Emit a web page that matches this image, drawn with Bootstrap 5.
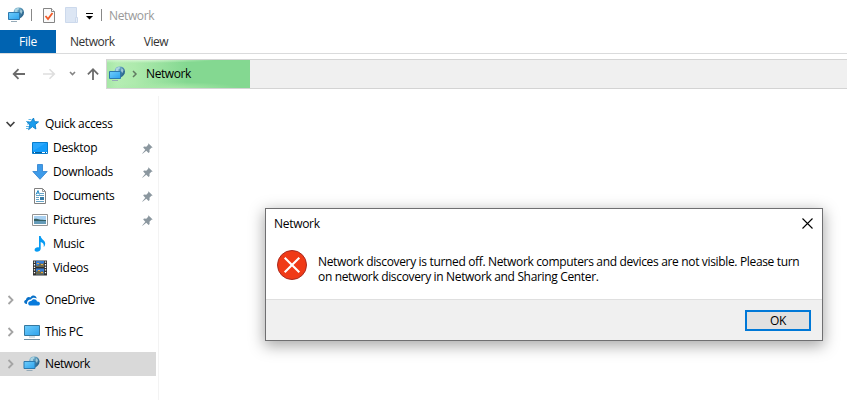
<!DOCTYPE html>
<html lang="en">
<head>
<meta charset="utf-8">
<meta name="viewport" content="width=device-width, initial-scale=1">
<title>Network</title>
<link href="https://cdn.jsdelivr.net/npm/bootstrap@5.3.0/dist/css/bootstrap.min.css" rel="stylesheet">
<style>
  body { font: 12px/15px "Open Sans", "Noto Sans", sans-serif; color: #000; letter-spacing: -.3px; height: 400px; overflow: hidden; background: #fff; }
  svg { display: block; flex: none; overflow: visible; }
  .titlebar { height: 30px; padding-left: 8px; color: #999; }
  .caption { margin-left: 7px; letter-spacing: -.38px; }
  .sep { width: 1px; height: 12px; background: #888; }
  .ribbon { height: 24px; border-bottom: 1px solid #dadbdc; }
  .ribbon .nav-link { color: #333; padding: 0; line-height: 24px; height: 23px; }
  .ribbon .nav-link.active { background: #0063b1; color: #fff; width: 56px; text-align: center; }
  .ribbon .tab-network { margin-left: 14px; letter-spacing: -.45px; }
  .ribbon .tab-view { margin-left: 29px; letter-spacing: -.4px; }
  .toolbar { height: 42px; padding-top: 5px; }
  .arrows { width: 106px; height: 30px; }
  .address { height: 30px; background: #f0f0f0; border: 2px solid #d4d4d4; border-width: 1px 0 1px 1px; }
  .progress-fill { width: 143px; height: 28px; background: radial-gradient(ellipse 68px 6px at 45% 100%, #a9e9a9, transparent), radial-gradient(ellipse 80px 3px at 20% 0, #d5f6d3, transparent), linear-gradient(90deg, #a7e7a7 0, #b5edb3 10px, #aeeaad 28px, #84d891 80px, #84d891); }
  .crumb { margin-left: 9px; margin-top: -2px; letter-spacing: -.4px; }
  .sidebar { width: 159px; height: 304px; padding-top: 16px; border-right: 1px solid #f3f3f3; }
  .item { height: 24px; width: 156px; padding-left: 6px; }
  .item.sub { padding-left: 32px; }
  .item .name { margin-left: 5px; margin-top: -2px; }
  .item.top-level { margin-top: 8px; }
  .item.top-level .name { letter-spacing: -.4px; }
  .item .chev { margin-right: 8px; }
  .item .pin { margin-left: auto; margin-right: 3px; }
  .selected { background: #d9d9d9; }
  .dialog { left: 265px; top: 208px; width: 558px; height: 133px; border: 1px solid #6f6f71; background: #fff; box-shadow: 0 4px 14px 1px rgba(0,0,0,.34); }
  .dialog-title { height: 29px; padding: 0 9px 0 8px; }
  .dialog-text { height: 61px; padding: 12px 0 0 11px; }
  .message { margin: 4px 0 0 11px; white-space: nowrap; letter-spacing: -.34px; }
  .dialog-foot { height: 41px; background: #f0f0f0; border-top: 1px solid #dfdfdf; padding-right: 11px; }
  .ok { width: 66px; height: 21px; padding: 0; border: 2px solid #0078d7; border-radius: 0; background: #e1e1e1; color: #000; font-size: 12px; line-height: 17px; letter-spacing: -.4px; }
</style>
<script src="https://cdn.jsdelivr.net/npm/bootstrap@5.3.0/dist/js/bootstrap.bundle.min.js"></script>
</head>
<body class="position-relative">
<svg width="0" height="0" class="position-absolute">
  <defs>
    <linearGradient id="screen" x1="0" y1="0" x2="1" y2="1"><stop offset="0" stop-color="#70cdfb"/><stop offset="1" stop-color="#2ca2ed"/></linearGradient>
    <linearGradient id="globe" x1="0" y1="0" x2="1" y2=".6"><stop offset="0" stop-color="#8fc3da"/><stop offset=".5" stop-color="#5f9dbd"/><stop offset="1" stop-color="#255f88"/></linearGradient>
    <symbol id="network" viewBox="0 0 16 16">
      <path d="M5.5 5A5.3 5.3 0 0 1 16 5.2c0 3.2-1.8 4.9-4.5 6.300z" fill="url(#globe)"/>
      <path d="M7 2.500l3-1.700 1.500 1.200-2 1.300v1.700H7zM12.500 2l2 2-1 3-1.500-2z" fill="#c4e4ec" opacity=".7"/>
      <path d="M.5 5.500h11v7H.5z" fill="url(#screen)" stroke="#2d79ae"/>
      <path d="M3 14.500h6" stroke="#95aab8"/>
    </symbol>
    <symbol id="pin" viewBox="0 0 11 11">
      <path d="M6.300.3l4.400 4.200-1.300.3-1.900 2 .1 2.300-1 .8-2.300-2.200L.5 10.800l-.3-.3 3.100-3.800L1.200 4.500l.8-.9 2.300.1 1.900-1.900z" fill="#8b979f"/>
    </symbol>
    <symbol id="chevron" viewBox="0 0 9 10"><path d="M2.500 1l4 4-4 4" fill="none" stroke="#a4a4a4" stroke-width="1.800"/></symbol>
  </defs>
</svg>

<header class="titlebar d-flex align-items-center">
  <svg width="16" height="16"><use href="#network"/></svg>
  <span class="sep" style="margin-left:7px"></span>
  <svg width="12" height="15" viewBox="0 0 12 15" style="margin-left:11px"><path d="M.5.5h8l3 3v11H.5z" fill="#fafafa" stroke="#858585"/><path d="M8.500.5v3h3" fill="#fff" stroke="#858585"/><path d="M2.500 8l2.500 3 4.500-6" fill="none" stroke="#f05a28" stroke-width="1.800"/></svg>
  <svg width="13" height="16" viewBox="0 0 13 16" style="margin-left:10px"><path d="M.5.5h11v15H.5z" fill="#dce6f4" stroke="#ccd9ec"/><path d="M10.500 10.500h2v5h-2z" fill="#e7eef8" stroke="#ccd9ec"/></svg>
  <svg width="7" height="7" viewBox="0 0 7 7" style="margin-left:8px;margin-top:2px"><path d="M0 .5h7" stroke="#000"/><path d="M0 3h7L3.500 6.500z"/></svg>
  <span class="sep" style="margin-left:8px"></span>
  <span class="caption">Network</span>
</header>

<nav class="ribbon nav flex-nowrap">
  <a class="nav-link active" href="#">File</a>
  <a class="nav-link tab-network" href="#">Network</a>
  <a class="nav-link tab-view" href="#">View</a>
</nav>

<div class="toolbar d-flex">
  <div class="arrows d-flex align-items-center">
    <svg width="106" height="30" viewBox="0 0 106 30" fill="none">
      <path d="M25 15H14M18.500 10.200L13.700 15l4.800 4.800" stroke="#6b6b6b" stroke-width="1.800"/>
      <path d="M43 15h11M49.500 10.200l4.800 4.800-4.800 4.800" stroke="#dedede" stroke-width="1.600"/>
      <path d="M70 13l2.500 2.500L75 13" stroke="#858585" stroke-width="1.600"/>
      <path d="M93 21V10.500M87.900 15.300L93 10.200l5.100 5.100" stroke="#6b6b6b" stroke-width="1.800"/>
    </svg>
  </div>
  <div class="address flex-grow-1">
    <div class="progress-fill d-flex align-items-center">
      <svg width="16" height="16" style="margin-left:2px;margin-top:-1px"><use href="#network"/></svg>
      <svg width="5" height="8" viewBox="0 0 5 8" style="margin-left:7px"><path d="M1 1l3 3-3 3" fill="none" stroke="#617b62" stroke-width="1.500"/></svg>
      <span class="crumb">Network</span>
    </div>
  </div>
</div>

<aside class="sidebar">
  <div class="item d-flex align-items-center">
    <svg class="chev" width="9" height="10" viewBox="0 0 9 10" style="margin-right:10px"><path d="M.6 3l3.900 4 3.900-4" fill="none" stroke="#424242" stroke-width="1.700"/></svg>
    <svg width="15" height="14" viewBox="0 0 15 14"><path d="M8.500 1l1 3.700 4 .2-3.400 2.800.8 4.300-3.500-2.400-3.800 3 1.300-4.700-2.600-2.600 3.800-.4z" fill="#1b9dee" stroke="#0f82cd"/><path d="M3.500 2.500h3M1 4.500h3M2 7h2M1 9.500h3M1 11.500h2" stroke="#4faee2" stroke-width=".9"/></svg>
    <span class="name">Quick access</span>
  </div>
  <div class="item sub d-flex align-items-center">
    <svg width="16" height="12" viewBox="0 0 16 12"><path d="M.5.5h15v11H.5z" fill="#159dfa" stroke="#087dcc"/><path d="M1 9V1h13z" fill="#41b3ff" opacity=".5"/><path d="M1 10.500h14" stroke="#075f9d"/><path d="M2 10.500h1M10 10.500h3M14 10.500h1" stroke="#fff"/></svg>
    <span class="name">Desktop</span><svg class="pin" width="11" height="11"><use href="#pin"/></svg>
  </div>
  <div class="item sub d-flex align-items-center">
    <svg width="16" height="16" viewBox="0 0 16 16"><path d="M5.500.5h5v7h4.700L8 15.300.8 7.500h4.700z" fill="#3d9be9" stroke="#2b7fce" stroke-width=".8"/></svg>
    <span class="name">Downloads</span><svg class="pin" width="11" height="11"><use href="#pin"/></svg>
  </div>
  <div class="item sub d-flex align-items-center">
    <svg width="16" height="16" viewBox="0 0 16 16"><path d="M2.500.5h8l3 3v12h-11z" fill="#fff" stroke="#808080"/><path d="M10.500.5v3h3" fill="none" stroke="#999"/><path d="M4 6.500L6 2.500l1.500 4M5 5h2" fill="none" stroke="#258bc6"/><path d="M8 5.500h4M4 7.500h8M4 9.500h3M4 11.500h3M4 13.500h8" stroke="#65a4c7"/><path d="M8 9h4v3H8z" fill="#397ca6"/></svg>
    <span class="name">Documents</span><svg class="pin" width="11" height="11"><use href="#pin"/></svg>
  </div>
  <div class="item sub d-flex align-items-center">
    <svg width="16" height="12" viewBox="0 0 16 12"><path d="M.5.5h15v11H.5z" fill="#fff" stroke="#949494"/><path d="M2 2h12v8H2z" fill="#a9d1f1"/><path d="M2 5c3-1 5 1 12 1v1H2z" fill="#345f63"/><path d="M2 7h12v3H2z" fill="#659bb8"/></svg>
    <span class="name">Pictures</span><svg class="pin" width="11" height="11"><use href="#pin"/></svg>
  </div>
  <div class="item sub d-flex align-items-center">
    <svg width="16" height="16" viewBox="0 0 16 16"><path d="M7 0h1.700c.2 3.400 4.400 4 4.500 7.500 0 1.500-.8 3-1.500 3.600.5-2.900-.5-4.500-3-5.200v6.800c0 3.400-6.300 4.300-6.100 1.100.1-2 2.300-2.900 4.400-2.400z" fill="#079bf3"/></svg>
    <span class="name">Music</span>
  </div>
  <div class="item sub d-flex align-items-center">
    <svg width="16" height="16" viewBox="0 0 16 16"><path d="M1 .5h14v15H1z" fill="#303030"/><path d="M4 1h8v6H4zM4 8.500h8v6H4z" fill="#377dd4"/><path d="M4 5l2 1 2-3 2 1 2-1v4H4zM4 12l3-2 1 2 3-1 1 3.500H4z" fill="#6d6a4e"/><path d="M5 3h2v1H5zM9 4h2v1H9zM6 10h2v1H6zM9 12h2v1H9z" fill="#e9a93b"/><path d="M2.500 1.500v13M13.500 1.500v13" stroke="#fff" stroke-width="1.300" stroke-dasharray="1.300 1.300"/></svg>
    <span class="name">Videos</span>
  </div>
  <div class="item top-level d-flex align-items-center">
    <svg class="chev" width="9" height="10"><use href="#chevron"/></svg>
    <svg width="17" height="11" viewBox="0 0 17 11"><path d="M4 9C1 9.200 0 5.700 3 4.800 3 2.200 6 1.200 7.500 2.500 9-.3 13-.1 13.800 3.500 11 2.300 9 2.800 8 4.600 5.300 4.500 3.800 6.300 4 9z" fill="#0870c8"/><path d="M7 10.500c-2.700-.3-2.200-4.700 1.300-4.400C9.200 3.400 13.400 3.500 14 6.500c3.600-.2 3.700 3.700 1.300 4z" fill="#087bdc"/></svg>
    <span class="name">OneDrive</span>
  </div>
  <div class="item top-level d-flex align-items-center">
    <svg class="chev" width="9" height="10"><use href="#chevron"/></svg>
    <svg width="17" height="15" viewBox="0 0 17 15"><path d="M1.500.5h15v10h-15z" fill="url(#screen)" stroke="#35789f"/><path d="M6 12h6" stroke="#adc0ca"/><path d="M1 14.500h16" stroke="#7190a3"/></svg>
    <span class="name">This PC</span>
  </div>
  <div class="item top-level selected d-flex align-items-center">
    <svg class="chev" width="9" height="10"><use href="#chevron"/></svg>
    <svg width="17" height="16"><use href="#network"/></svg>
    <span class="name">Network</span>
  </div>
</aside>

<section class="dialog position-absolute" role="dialog" aria-label="Network">
  <div class="dialog-title d-flex align-items-center justify-content-between">
    <span>Network</span>
    <svg width="11" height="11" viewBox="0 0 11 11"><path d="M.5.5l10 10M10.500.5l-10 10" stroke="#000" stroke-width="1.100"/></svg>
  </div>
  <div class="dialog-text d-flex align-items-start">
    <svg width="30" height="30" viewBox="0 0 30 30"><circle cx="15" cy="15" r="14.500" fill="#f03a17" stroke="#a92b20"/><path d="M7.700 7.700l14.600 14.600M22.300 7.700L7.700 22.300" stroke="#fff" stroke-width="2.100"/></svg>
    <div class="message">Network discovery is turned off. Network computers and devices are not visible. Please turn<br>on network discovery in Network and Sharing Center.</div>
  </div>
  <div class="dialog-foot d-flex align-items-center justify-content-end"><button class="btn ok" type="button">OK</button></div>
</section>
</body>
</html>
